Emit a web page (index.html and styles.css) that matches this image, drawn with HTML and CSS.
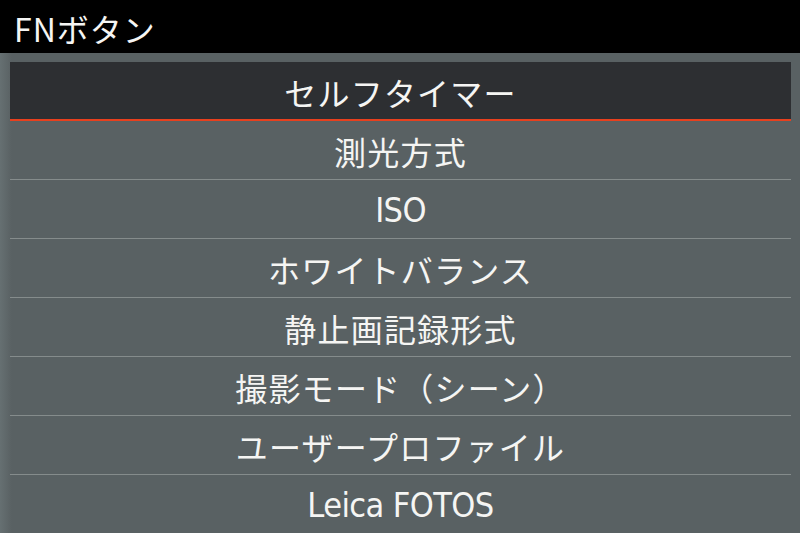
FILE: index.html
```html
<!DOCTYPE html>
<html lang="ja">
<head>
<meta charset="utf-8">
<link rel="stylesheet" href="styles.css">
</head>
<body>
<header class="title">FNボタン</header>
<main class="panel">
  <ul class="menu">
    <li class="item selected">セルフタイマー</li>
    <li class="item">測光方式</li>
    <li class="item"><span class="latin">ISO</span></li>
    <li class="item">ホワイトバランス</li>
    <li class="item">静止画記録形式</li>
    <li class="item">撮影モード（シーン）</li>
    <li class="item">ユーザープロファイル</li>
    <li class="item"><span class="latin">Leica FOTOS</span></li>
  </ul>
</main>
</body>
</html>
```
FILE: styles.css
```css
html, body {
  margin: 0;
  padding: 0;
  width: 800px;
  height: 533px;
  overflow: hidden;
  background: #596163;
  font-family: "Noto Sans CJK JP", "Noto Sans", sans-serif;
  color: #f5f5f3;
}
.title {
  height: 53px;
  background: #000;
  display: flex;
  align-items: center;
  padding-left: 14px;
  font-size: 32px;
  letter-spacing: 1px;
  box-sizing: border-box;
  padding-top: 2px;
}
.panel {
  padding: 9px 9px 0 10px;
  background: linear-gradient(to right, #667072 0, #5b6365 10px, #596163 12px);
  height: 480px;
  box-sizing: border-box;
}
.menu {
  list-style: none;
  margin: 0;
  padding: 0;
}
.item {
  height: 59px;
  box-sizing: border-box;
  border-bottom: 1px solid #858c8c;
  display: flex;
  align-items: center;
  justify-content: center;
  font-size: 32px;
  letter-spacing: 1.2px;
  padding-top: 1px;
}
.item.selected {
  background: #2d2f32;
  border-bottom: 2px solid #e8401e;
  padding-top: 2px;
}
.item:last-child {
  border-bottom: none;
}
.latin {
  font-family: "DejaVu Sans Condensed", "Noto Sans", sans-serif;
  font-size: 34px;
  letter-spacing: -0.6px;
  line-height: 1;
}
```
